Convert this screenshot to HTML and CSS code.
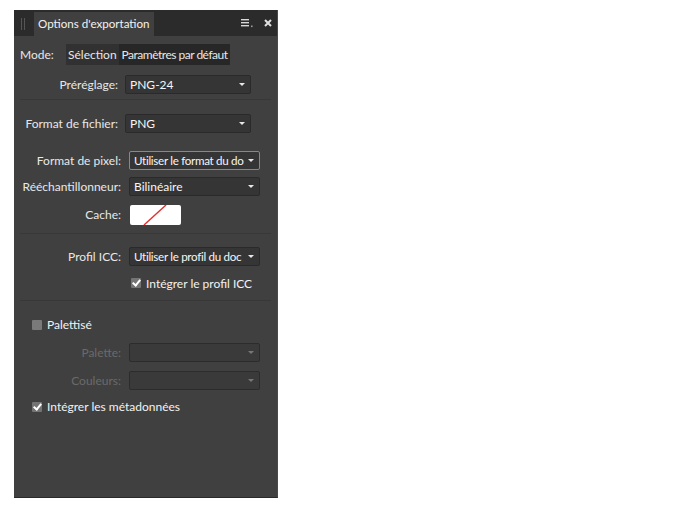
FILE: index.html
```html
<!DOCTYPE html>
<html lang="fr">
<head>
    <meta charset="UTF-8">
    <title>Options d'exportation</title>
    <link rel="stylesheet" href="styles.css">
</head>
<body>

    <div class="panel">
        <!-- barre de titre -->
        <div class="panel-head">
            <span class="grip"></span>
            <span class="tab">Options d'exportation</span>
            <span class="head-tools">
                <svg class="menu-icon" width="12" height="9" viewBox="0 0 12 9">
                    <rect x="0" y="0" width="8" height="1.4" fill="#d8d8d8"/>
                    <rect x="0" y="3" width="8" height="1.4" fill="#d8d8d8"/>
                    <rect x="0" y="6" width="8" height="1.4" fill="#d8d8d8"/>
                    <rect x="10" y="6.5" width="1.6" height="1.6" fill="#9a9a9a"/>
                </svg>
                <svg class="close-icon" width="8" height="8" viewBox="0 0 8 8">
                    <path d="M1 1 L7 7 M7 1 L1 7" stroke="#e0e0e0" stroke-width="2"/>
                </svg>
            </span>
        </div>

        <div class="panel-body">
            <div class="mode-row">
                <span class="mode-label">Mode:</span>
                <span class="seg seg-a">Sélection</span>
                <span class="seg seg-b">Paramètres par défaut</span>
            </div>

            <div class="row row-a first">
                <span class="label">Préréglage:</span>
                <span class="select"><span class="val">PNG-24</span><i class="arrow"></i></span>
            </div>
            <div class="sep sep-1"></div>

            <div class="row row-a file-row">
                <span class="label">Format de fichier:</span>
                <span class="select"><span class="val">PNG</span><i class="arrow"></i></span>
            </div>

            <div class="row row-b pixel-row">
                <span class="label">Format de pixel:</span>
                <span class="select focus"><span class="val tight">Utiliser le format du do</span><i class="arrow"></i></span>
            </div>
            <div class="row row-b resample-row">
                <span class="label">Rééchantillonneur:</span>
                <span class="select"><span class="val">Bilinéaire</span><i class="arrow"></i></span>
            </div>
            <div class="row row-b cache-row">
                <span class="label">Cache:</span>
                <span class="swatch">
                    <svg width="51" height="20" viewBox="0 0 51 20">
                        <line x1="14" y1="20" x2="36" y2="0" stroke="#e03030" stroke-width="1.4"/>
                    </svg>
                </span>
            </div>
            <div class="sep sep-2"></div>

            <div class="row row-b icc-row">
                <span class="label">Profil ICC:</span>
                <span class="select"><span class="val tight">Utiliser le profil du doc</span><i class="arrow"></i></span>
            </div>
            <div class="row row-b check-row">
                <span class="label"></span>
                <label class="check"><span class="box checked"></span>Intégrer le profil ICC</label>
            </div>
            <div class="sep sep-3"></div>

            <label class="check palette-check"><span class="box"></span>Palettisé</label>

            <div class="row row-b disabled palette-row">
                <span class="label">Palette:</span>
                <span class="select"><span class="val"></span><i class="arrow"></i></span>
            </div>
            <div class="row row-b disabled colors-row">
                <span class="label">Couleurs:</span>
                <span class="select"><span class="val"></span><i class="arrow"></i></span>
            </div>

            <label class="check meta-check"><span class="box checked"></span>Intégrer les métadonnées</label>
        </div>
    </div>

</body>
</html>
```

FILE: styles.css
```css
body {
    margin: 0;
    background: #ffffff;
    font-family: Lato, "Open Sans", sans-serif;
    font-size: 12px;
    color: #e8e8e8;
}
.panel {
    margin: 10px 0 0 14px;
    width: 264px;
    height: 488px;
    background: #404040;
    border-bottom: 1px solid #2a2a2a;
    border-right: 1px solid #4a4a4a;
    box-sizing: border-box;
}
.panel-head {
    height: 26px;
    background: #2b2b2b;
    display: flex;
    align-items: flex-end;
}
.grip {
    width: 2px;
    height: 12px;
    margin: 0 9px 6px 7px;
    border-left: 1px solid #555;
    border-right: 1px solid #555;
}
.tab {
    height: 24px;
    line-height: 23px;
    padding: 0 4px 0 4px;
    background: #404040;
    color: #f2f2f2;
    font-size: 11.6px;
}
.head-tools {
    margin-left: auto;
    align-self: center;
    display: flex;
    align-items: center;
    gap: 11px;
    padding-right: 5px;
}
.menu-icon {
    display: block;
}
.close-icon {
    display: block;
}
.panel-body {
    padding: 8px 6px 0 6px;
    display: flex;
    flex-direction: column;
}
.mode-row {
    display: flex;
    align-items: center;
    height: 21px;
}
.mode-label {
    width: 46px;
}
.seg {
    height: 21px;
    line-height: 21px;
    white-space: nowrap;
}
.seg-a {
    padding: 0 2px;
    background: #313131;
}
.seg-b {
    padding: 0 2px 0 3px;
    background: #272727;
    letter-spacing: -0.5px;
}
.row {
    display: flex;
    align-items: center;
    height: 19px;
}
.label {
    text-align: right;
    white-space: nowrap;
}
.row-a .label {
    width: 98px;
    margin-right: 7px;
}
.row-a .select {
    width: 126px;
}
.row-b .label {
    width: 101px;
    margin-right: 8px;
}
.row-b .select {
    width: 131px;
}
.select {
    display: flex;
    align-items: center;
    box-sizing: border-box;
    height: 19px;
    padding: 0 5px 0 4px;
    background: #353535;
    border: 1px solid #2a2a2a;
    border-radius: 2px;
    color: #f6f6f6;
}
.val {
    flex: 1;
    white-space: nowrap;
}
.val.tight {
    font-size: 11.6px;
    letter-spacing: -0.3px;
}
.select.focus {
    border-color: #7a8aa0;
}
.arrow {
    flex: none;
    margin-left: 1px;
    width: 0;
    height: 0;
    border-left: 3px solid transparent;
    border-right: 3px solid transparent;
    border-top: 3px solid #e8e8e8;
}
.first {
    margin-top: 10px;
}
.sep {
    height: 1px;
    background: #383838;
}
.sep-1 {
    margin-top: 5px;
}
.file-row {
    margin-top: 14px;
}
.pixel-row {
    margin-top: 18px;
}
.resample-row {
    margin-top: 7px;
}
.cache-row {
    margin-top: 8px;
    height: 21px;
}
.swatch {
    width: 51px;
    height: 20px;
    margin-left: 1px;
    background: #ffffff;
    border-radius: 2px;
    overflow: hidden;
}
.swatch svg {
    display: block;
}
.sep-2 {
    margin-top: 8px;
}
.icc-row {
    margin-top: 13px;
}
.check-row {
    margin-top: 11px;
    height: 12px;
}
.check {
    display: flex;
    align-items: center;
    color: #f2f2f2;
    white-space: nowrap;
}
.check-row .check {
    margin-left: 2px;
}
.box {
    width: 10px;
    height: 10px;
    margin-right: 5px;
    border-radius: 1px;
    background: #7a7a7a;
    position: relative;
}
.box.checked {
    background: #747474;
}
.box.checked::after {
    content: "";
    position: absolute;
    left: 3px;
    top: 0px;
    width: 3px;
    height: 6px;
    border-right: 2px solid #ffffff;
    border-bottom: 2px solid #ffffff;
    transform: rotate(40deg);
}
.sep-3 {
    margin-top: 11px;
}
.palette-check {
    margin-top: 16px;
    margin-left: 12px;
}
.disabled .label {
    color: #6a6a6a;
}
.disabled .select {
    background: #3a3a3a;
    border-color: #2c2c2c;
}
.disabled .arrow {
    border-top-color: #777;
}
.palette-row {
    margin-top: 11px;
}
.colors-row {
    margin-top: 9px;
}
.meta-check {
    margin-top: 9px;
    margin-left: 12px;
}
```
